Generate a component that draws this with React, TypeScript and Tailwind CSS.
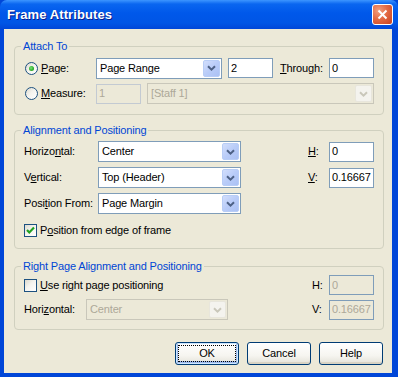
import React from "react";

function Chevron({ disabled }: { disabled?: boolean }) {
  return (
    <svg width="9" height="6" viewBox="0 0 9 6">
      <path
        d="M1 1.2 L4.5 4.6 L8 1.2"
        fill="none"
        stroke={disabled ? "#C9C7BA" : "#4D6185"}
        strokeWidth="2"
      />
    </svg>
  );
}

function Combo({ value, w, disabled }: { value: string; w: string; disabled?: boolean }) {
  return (
    <div
      className={`${w} h-[21px] flex items-stretch border ${
        disabled ? "border-[#C9C7BA] bg-[#ECE9D8] text-[#ACA899]" : "border-[#7F9DB9] bg-white text-black"
      }`}
    >
      <div className="flex-1 flex items-center pl-[3px] whitespace-nowrap overflow-hidden">{value}</div>
      <div
        className={`w-[17px] m-[1px] rounded-[2px] flex items-center justify-center border ${
          disabled
            ? "border-[#E8E6DC] bg-[#F4F3EE]"
            : "border-[#B8CDF6] bg-[linear-gradient(135deg,#D2DEFC_0%,#B9CCF8_50%,#ABC1F4_100%)]"
        }`}
      >
        <Chevron disabled={disabled} />
      </div>
    </div>
  );
}

function Edit({
  value,
  w,
  disabled,
  border = "border-[#7F9DB9]",
}: {
  value: string;
  w: string;
  disabled?: boolean;
  border?: string;
}) {
  return (
    <div
      className={`${w} h-[20px] border ${border} flex items-center pl-[2px] whitespace-nowrap overflow-hidden ${
        disabled ? "bg-[#ECE9D8] text-[#ACA899]" : "bg-white text-black"
      }`}
    >
      {value}
    </div>
  );
}

function Radio({ checked }: { checked?: boolean }) {
  return (
    <div className="w-[13px] h-[13px] rounded-full border border-[#1C5180] bg-[linear-gradient(135deg,#DCD9CD_0%,#F4F3EE_45%,#FFFFFF_100%)] flex items-center justify-center shrink-0">
      {checked && (
        <div className="w-[5px] h-[5px] rounded-full bg-[radial-gradient(circle_at_40%_40%,#7CE47A_0%,#2FB12D_55%,#178C15_100%)]" />
      )}
    </div>
  );
}

function Check({ checked }: { checked?: boolean }) {
  return (
    <div className="w-[13px] h-[13px] border border-[#1C5180] bg-[linear-gradient(135deg,#DCD9CD_0%,#F4F3EE_45%,#FFFFFF_100%)] flex items-center justify-center shrink-0">
      {checked && (
        <svg width="11" height="11" viewBox="0 0 11 11">
          <path d="M2 5 L4.3 7.4 L9 2.6" fill="none" stroke="#21A121" strokeWidth="2.2" />
        </svg>
      )}
    </div>
  );
}

function Group({ title, h, children }: { title: string; h: string; children: React.ReactNode }) {
  return (
    <div className={`relative ml-[10px] w-[370px] ${h} border border-[#D0D0BF] rounded-[4px]`}>
      <div className="absolute left-[6px] top-[-8px] bg-[#ECE9D8] px-[2px] text-[#0046D5] leading-[14px]">
        {title}
      </div>
      {children}
    </div>
  );
}

function Button({ label, isDefault }: { label: string; isDefault?: boolean }) {
  return (
    <div
      className={`w-[64px] h-[23px] rounded-[3px] border border-[#003C74] bg-[linear-gradient(180deg,#FFFFFF_0%,#F6F5F0_60%,#E3E1D8_100%)] flex items-center justify-center p-[2px] ${
        isDefault ? "shadow-[inset_0_0_0_1px_#CEE7FF,inset_0_-1px_0_2px_#9DB9EB]" : "shadow-[inset_0_-2px_0_0_#D8D3C4]"
      }`}
    >
      <div
        className={`w-full h-full flex items-center justify-center ${
          isDefault ? "border border-dotted border-black" : ""
        }`}
      >
        {label}
      </div>
    </div>
  );
}

export default function App() {
  return (
    <div className="w-[398px] h-[377px] flex flex-col bg-[#0046D8] font-['Liberation_Sans',Arial,sans-serif] text-[11px] tracking-[-0.15px] text-black overflow-hidden">
      {/* Title bar */}
      <div className="h-[29px] shrink-0 flex items-center justify-between pl-[7px] pr-[5px] bg-[linear-gradient(180deg,#3D95FF_0%,#0A66F0_14%,#0058EA_45%,#0055E5_80%,#0046D8_100%)] rounded-t-[7px]">
        <span className="text-white font-bold text-[13px] [text-shadow:1px_1px_0_#0A1E8C] tracking-[0.1px]">
          Frame Attributes
        </span>
        <div className="w-[21px] h-[21px] rounded-[3px] border border-white bg-[radial-gradient(circle_at_30%_30%,#F2A080_0%,#E36B45_45%,#C8401F_100%)] flex items-center justify-center">
          <svg width="11" height="11" viewBox="0 0 11 11">
            <path d="M1.5 1.5 L9.5 9.5 M9.5 1.5 L1.5 9.5" stroke="white" strokeWidth="2" />
          </svg>
        </div>
      </div>

      {/* Body */}
      <div className="flex-1 ml-[4px] mr-[6px] mb-[4px] bg-[#ECE9D8] pt-[17px]">
        {/* Attach To */}
        <Group title="Attach To" h="h-[69px]">
          <div className="pt-[10px] pl-[10px]">
            <div className="flex items-center h-[22px]">
              <div className="w-[71px] flex items-center gap-[3px]">
                <Radio checked />
                <span>
                  <u>P</u>age:
                </span>
              </div>
              <Combo value="Page Range" w="w-[126px]" />
              <div className="ml-[6px]">
                <Edit value="2" w="w-[45px]" />
              </div>
              <span className="ml-[7px] w-[49px]">
                <u>T</u>hrough:
              </span>
              <Edit value="0" w="w-[45px]" />
            </div>
            <div className="flex items-center h-[21px] mt-[4px]">
              <div className="w-[71px] flex items-center gap-[3px]">
                <Radio />
                <span>
                  <u>M</u>easure:
                </span>
              </div>
              <Edit value="1" w="w-[45px]" disabled border="border-[#C3CAD2]" />
              <div className="ml-[6px]">
                <Combo value="[Staff 1]" w="w-[227px]" disabled />
              </div>
            </div>
          </div>
        </Group>

        <div className="h-[15px]" />

        {/* Alignment and Positioning */}
        <Group title="Alignment and Positioning" h="h-[119px]">
          <div className="pt-[10px] pl-[9px] pr-[9px]">
            <div className="flex items-center h-[21px]">
              <span className="w-[74px]">
                Horizo<u>n</u>tal:
              </span>
              <Combo value="Center" w="w-[143px]" />
              <span className="ml-auto w-[21px]">
                <u>H</u>:
              </span>
              <Edit value="0" w="w-[45px]" />
            </div>
            <div className="flex items-center h-[21px] mt-[5px]">
              <span className="w-[74px]">
                V<u>e</u>rtical:
              </span>
              <Combo value="Top (Header)" w="w-[143px]" />
              <span className="ml-auto w-[21px]">
                <u>V</u>:
              </span>
              <Edit value="0.16667" w="w-[45px]" />
            </div>
            <div className="flex items-center h-[21px] mt-[5px]">
              <span className="w-[74px]">
                Posi<u>t</u>ion From:
              </span>
              <Combo value="Page Margin" w="w-[143px]" />
            </div>
            <div className="flex items-center gap-[3px] mt-[10px] h-[13px]">
              <Check checked />
              <span>
                P<u>o</u>sition from edge of frame
              </span>
            </div>
          </div>
        </Group>

        <div className="h-[17px]" />

        {/* Right Page Alignment and Positioning */}
        <Group title="Right Page Alignment and Positioning" h="h-[64px]">
          <div className="pt-[8px] pl-[9px] pr-[9px]">
            <div className="flex items-center h-[20px]">
              <div className="flex items-center gap-[3px]">
                <Check />
                <span>
                  <u>U</u>se right page positioning
                </span>
              </div>
              <span className="ml-auto w-[17px]">H:</span>
              <Edit value="0" w="w-[45px]" disabled />
            </div>
            <div className="flex items-center h-[21px] mt-[4px]">
              <span className="w-[62px]">
                Hori<u>z</u>ontal:
              </span>
              <Combo value="Center" w="w-[142px]" disabled />
              <span className="ml-auto w-[17px]">V:</span>
              <Edit value="0.16667" w="w-[45px]" disabled />
            </div>
          </div>
        </Group>

        {/* Buttons */}
        <div className="flex justify-end gap-[8px] mt-[12px] pr-[9px]">
          <Button label="OK" isDefault />
          <Button label="Cancel" />
          <Button label="Help" />
        </div>
      </div>
    </div>
  );
}
